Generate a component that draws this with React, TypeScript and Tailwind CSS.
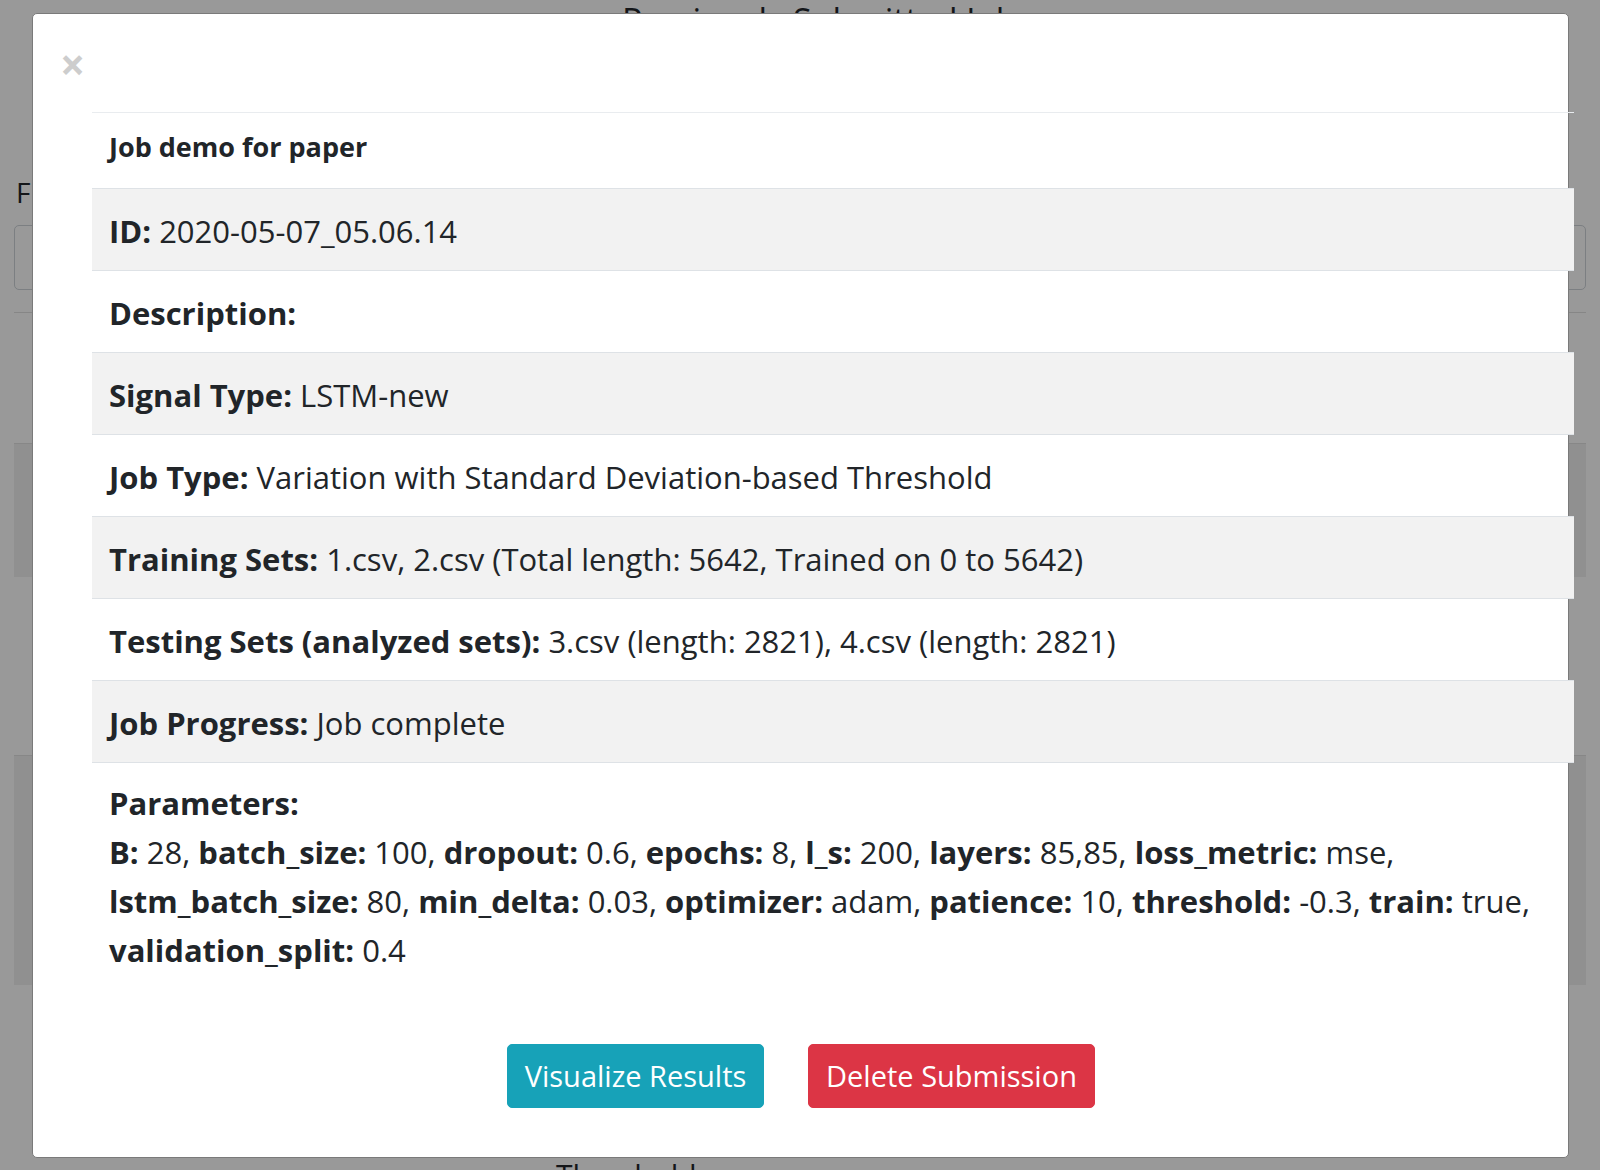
import React from 'react'

type Row = { label: string; value: string }

const rows: Row[] = [
  { label: 'ID:', value: '2020-05-07_05.06.14' },
  { label: 'Description:', value: '' },
  { label: 'Signal Type:', value: 'LSTM-new' },
  { label: 'Job Type:', value: 'Variation with Standard Deviation-based Threshold' },
  { label: 'Training Sets:', value: '1.csv, 2.csv (Total length: 5642, Trained on 0 to 5642)' },
  { label: 'Testing Sets (analyzed sets):', value: '3.csv (length: 2821), 4.csv (length: 2821)' },
  { label: 'Job Progress:', value: 'Job complete' },
]

const params: [string, string][][] = [
  [['B:', '28,'], ['batch_size:', '100,'], ['dropout:', '0.6,'], ['epochs:', '8,'], ['l_s:', '200,'], ['layers:', '85,85,'], ['loss_metric:', 'mse,']],
  [['lstm_batch_size:', '80,'], ['min_delta:', '0.03,'], ['optimizer:', 'adam,'], ['patience:', '10,'], ['threshold:', '-0.3,'], ['train:', 'true,']],
  [['validation_split:', '0.4']],
]

const Background = (): JSX.Element => (
  <div className="flex flex-col px-[14px] text-[#141619]">
    <div className="relative h-[13px]">
      <div className="absolute left-[608px] top-[3px] text-[34px] leading-none">Previously Submitted Jobs</div>
    </div>
    <div className="pt-[164px] pl-[2px] text-[28px] leading-[30px]">F</div>
    <div className="mt-[18px] h-[65px] rounded-[5px] border border-[#7c7f82]" />
    <div className="mt-[22px] h-px bg-[#868686]" />
    <div className="mt-[130px] h-[134px] border-t border-[#878787] bg-[#909090]" />
    <div className="mt-[178px] h-[230px] border-t border-[#878787] bg-[#909090]" />
    <div className="mt-[175px] pl-[542px] text-[30px] leading-none">Threshold</div>
  </div>
)

const App = (): JSX.Element => {
  return (
    <div className="relative h-[1170px] w-[1600px] overflow-hidden bg-[#999999] font-['Open_Sans','Noto_Sans',sans-serif]">
      <Background />
      <div className="absolute left-[32px] top-[13px] flex h-[1145px] w-[1537px] flex-col rounded-[5px] border border-[#7a7a7a] bg-white text-[#212529]">
        <div className="h-[98px] pl-[27px] pt-[28px]">
          <span className="text-[44px] font-bold leading-none text-[#cdcdcd]">×</span>
        </div>
        <div className="ml-[59px] w-[1482px]">
          <div className="flex h-[76px] items-center border-t border-[#e9ecef] px-[17px] pb-[6px] text-[27px] font-bold">
            Job demo for paper
          </div>
          {rows.map((r, i) => (
            <div
              key={r.label}
              className={
                i % 2 === 0
                  ? 'flex h-[82px] items-center border-t border-[#dee2e6] bg-[#f2f2f2] px-[17px] pt-[3px] text-[31px]'
                  : 'flex h-[82px] items-center border-t border-[#dee2e6] px-[17px] pt-[3px] text-[31px]'
              }
            >
              <span className="whitespace-pre">
                <b className="font-bold">{r.label}</b> {r.value}
              </span>
            </div>
          ))}
          <div className="border-t border-[#dee2e6] px-[17px] pt-[16px] text-[31px] leading-[49px]">
            <div className="font-bold">Parameters:</div>
            {params.map((line, li) => (
              <div key={li} className="whitespace-pre">
                {line.map(([k, v], j) => (
                  <span key={k}>
                    <b className="font-bold">{k}</b> {v}{j < line.length - 1 ? ' ' : ''}
                  </span>
                ))}
              </div>
            ))}
          </div>
        </div>
        <div className="mt-[69px] flex justify-center gap-[44px] pl-[1px]">
          <button className="h-[64px] w-[257px] rounded-[5px] border border-[#17a2b8] bg-[#17a2b8] text-[29px] text-white">
            Visualize Results
          </button>
          <button className="h-[64px] w-[287px] rounded-[5px] border border-[#dc3545] bg-[#dc3545] text-[29px] text-white">
            Delete Submission
          </button>
        </div>
      </div>
    </div>
  )
}

export default App
